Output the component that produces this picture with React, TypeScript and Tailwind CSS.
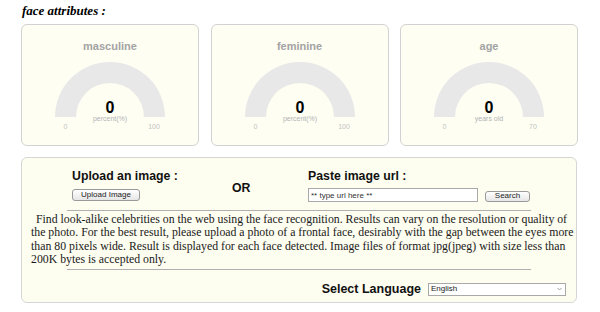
import React from "react";

type Gauge = {
  title: string;
  unit: string;
  max: number;
};

const gauges: Gauge[] = [
  { title: "masculine", unit: "percent(%)", max: 100 },
  { title: "feminine", unit: "percent(%)", max: 100 },
  { title: "age", unit: "years old", max: 70 },
];

const blurb = [
  "Find look-alike celebrities on the web using the face recognition. Results can vary on the resolution or quality of",
  "the photo. For the best result, please upload a photo of a frontal face, desirably with the gap between the eyes more",
  "than 80 pixels wide. Result is displayed for each face detected. Image files of format jpg(jpeg) with size less than",
  "200K bytes is accepted only.",
];

const GaugeCard = ({ gauge }: { gauge: Gauge }) => {
  return (
    <div className="w-[178px] h-[122px] shrink-0 rounded-[6px] border border-[#d2d2d2] bg-[#fefef3] pt-[14px] flex flex-col items-center">
      <div className="h-[14px] leading-[14px] text-[11px] font-bold text-[#a3a3a3] font-['Liberation_Sans',Arial,sans-serif]">
        {gauge.title}
      </div>
      <svg width="178" height="85" viewBox="0 0 178 85" className="block">
        <path d="M 34 64 A 55 55 0 0 1 144 64 L 123 64 A 34 34 0 0 0 55 64 Z" fill="#e9e8e8" />
        <text x="89" y="60" textAnchor="middle" fontSize="16" fontWeight="bold" fill="#010101" fontFamily="Liberation Sans, Arial, sans-serif">
          0
        </text>
        <text x="89" y="68" textAnchor="middle" fontSize="7" fill="#b3b3b3" fontFamily="Liberation Sans, Arial, sans-serif">
          {gauge.unit}
        </text>
        <text x="44.5" y="76" textAnchor="middle" fontSize="7" fill="#c2c2c2" fontFamily="Liberation Sans, Arial, sans-serif">
          0
        </text>
        <text x="133" y="76" textAnchor="middle" fontSize="7" fill="#c2c2c2" fontFamily="Liberation Sans, Arial, sans-serif">
          {gauge.max}
        </text>
      </svg>
    </div>
  );
};

const btn =
  "block rounded-[3px] border border-[#9a9a9a] bg-gradient-to-b from-white to-[#e6e6e6] text-[8px] leading-none text-[#222] font-['Liberation_Sans',Arial,sans-serif]";

export default function App() {
  return (
    <div className="w-[600px] h-[312px] bg-white overflow-hidden font-['Liberation_Sans',Arial,sans-serif]">
      <div className="pl-[22px] pt-[3px] h-[24px] leading-[16px] text-[13px] font-bold italic text-black font-['Liberation_Serif','Times_New_Roman',serif]">
        face attributes :
      </div>

      <div className="flex gap-[11.5px] pl-[21px]">
        {gauges.map((g) => (
          <GaugeCard key={g.title} gauge={g} />
        ))}
      </div>

      <div className="ml-[21px] mt-[11px] w-[556px] h-[146px] rounded-[6px] border border-[#d6d6d6] bg-[#fdfdf0]">
        <div className="flex items-start pl-[50px] pt-[11px] h-[52px]">
          <div className="w-[160px]">
            <div className="text-[12.3px] leading-[14px] font-bold text-[#111]">Upload an image :</div>
            <button className={`${btn} mt-[6px] w-[68px] h-[12px]`}>Upload Image</button>
          </div>
          <div className="w-[76px] mt-[12px] text-[12.3px] leading-[14px] font-bold text-[#111]">OR</div>
          <div>
            <div className="text-[12.3px] leading-[14px] font-bold text-[#111]">Paste image url :</div>
            <div className="flex items-center mt-[5px]">
              <input
                defaultValue="** type url here **"
                className="block w-[170px] h-[14px] border border-[#a9a9a9] bg-white px-[2px] text-[8px] text-[#333] outline-none"
              />
              <button className={`${btn} ml-[7px] w-[45px] h-[11px] mt-[2px]`}>Search</button>
            </div>
          </div>
        </div>

        <div className="mx-[45px] h-px bg-[#b0b0b0]" />

        <p className="px-[9px] pt-[2px] h-[58px] text-[11.8px] leading-[13.4px] text-[#1a1a1a] whitespace-nowrap font-['Liberation_Serif','Times_New_Roman',serif]">
          {blurb.map((line, i) => (
            <span key={i} className={i === 0 ? "block pl-[5px]" : "block"}>
              {line}
            </span>
          ))}
        </p>

        <div className="mx-[45px] h-px bg-[#b0b0b0]" />

        <div className="flex items-center justify-end pr-[10px] pt-[12px] gap-[7px]">
          <span className="text-[12.5px] leading-[14px] font-bold text-[#111]">Select Language</span>
          <div className="relative w-[138px] h-[13px]">
            <select className="block appearance-none w-full h-full border border-[#a9a9a9] bg-white pl-[2px] py-0 text-[8px] leading-none text-[#222] outline-none">
              <option>English</option>
            </select>
            <svg className="absolute right-[4px] top-[4.5px] pointer-events-none" width="5" height="4" viewBox="0 0 5 4">
              <path d="M0.5 1 L2.5 3 L4.5 1" fill="none" stroke="#888" strokeWidth="0.8" />
            </svg>
          </div>
        </div>
      </div>
    </div>
  );
}
